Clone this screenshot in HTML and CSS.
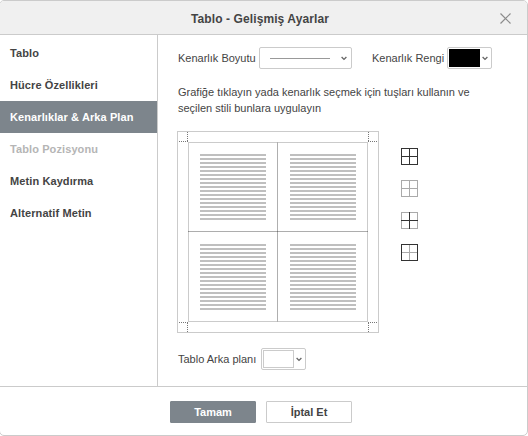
FILE: index.html
```html
<!DOCTYPE html>
<html lang="tr">
<head>
<meta charset="utf-8">
<title>Tablo - Gelişmiş Ayarlar</title>
<link rel="stylesheet" href="styles.css">
</head>
<body>
<div class="dialog">
  <header class="header">
    <h1 class="title">Tablo - Gelişmiş Ayarlar</h1>
    <svg class="close" width="11" height="11" viewBox="0 0 11 11"><path d="M.5.5l10 10M10.5.5l-10 10"/></svg>
  </header>
  <div class="body">
    <nav class="menu">
      <div class="item">Tablo</div>
      <div class="item">Hücre Özellikleri</div>
      <div class="item active">Kenarlıklar &amp; Arka Plan</div>
      <div class="item disabled">Tablo Pozisyonu</div>
      <div class="item">Metin Kaydırma</div>
      <div class="item">Alternatif Metin</div>
    </nav>
    <main class="content">
      <div class="row">
        <span class="label size-label">Kenarlık Boyutu</span>
        <div class="combo size-combo"><span class="line"></span><svg class="chevron" width="6" height="5" viewBox="0 0 6 5"><path d="M.6 1L3 3.4 5.4 1"/></svg></div>
        <span class="label color-label">Kenarlık Rengi</span>
        <div class="combo color-combo"><span class="swatch black"></span><svg class="chevron" width="6" height="5" viewBox="0 0 6 5"><path d="M.6 1L3 3.4 5.4 1"/></svg></div>
      </div>
      <p class="hint">Grafiğe tıklayın yada kenarlık seçmek için tuşları kullanın ve<br>seçilen stili bunlara uygulayın</p>
      <div class="designer">
        <svg class="preview" width="202" height="202" viewBox="0 0 202 202" shape-rendering="crispEdges">
          <defs>
            <pattern id="text-lines" width="66" height="4" patternUnits="userSpaceOnUse" y="23"><rect width="66" height="2" fill="#bfbfbf"/></pattern>
          </defs>
          <g fill="none" stroke="#cbcbcb">
            <rect x=".5" y=".5" width="201" height="201"/>
            <rect x="11.5" y="11.5" width="179" height="179"/>
          </g>
          <g fill="url(#text-lines)">
            <rect x="23" y="23" width="66" height="66"/>
            <rect x="113" y="23" width="66" height="66"/>
          </g>
          <g fill="url(#text-lines)" transform="translate(0 90)">
            <rect x="23" y="23" width="66" height="66"/>
            <rect x="113" y="23" width="66" height="66"/>
          </g>
          <path d="M100.5 11v180" stroke="#afafaf"/>
          <path d="M11 100.5h180" stroke="#000" stroke-opacity=".32"/>
          <g fill="none" stroke="#777" stroke-dasharray="1 1">
            <path d="M10.5 1v9M2 10.5h9"/>
            <path d="M191.5 1v9M191 10.5h9"/>
            <path d="M10.5 192v9M2 191.5h9"/>
            <path d="M191.5 192v9M191 191.5h9"/>
          </g>
        </svg>
        <div class="presets">
          <svg class="preset" viewBox="0 0 17 17"><path class="on" d="M.5.5h16v16H.5zM8.5 0v17M0 8.5h17"/></svg>
          <svg class="preset" viewBox="0 0 17 17"><path class="off" d="M.5.5h16v16H.5zM8.5 0v17M0 8.5h17"/></svg>
          <svg class="preset" viewBox="0 0 17 17"><path class="off" d="M.5.5h16v16H.5z"/><path class="on" d="M8.5 0v17M0 8.5h17"/></svg>
          <svg class="preset" viewBox="0 0 17 17"><path class="off" d="M8.5 0v17M0 8.5h17"/><path class="on" d="M.5.5h16v16H.5z"/></svg>
        </div>
      </div>
      <div class="row background-row">
        <span class="label background-label">Tablo Arka planı</span>
        <div class="combo color-combo"><span class="swatch"></span><svg class="chevron" width="6" height="5" viewBox="0 0 6 5"><path d="M.6 1L3 3.4 5.4 1"/></svg></div>
      </div>
    </main>
  </div>
  <footer class="footer">
    <button class="button primary">Tamam</button>
    <button class="button">İptal Et</button>
  </footer>
</div>
</body>
</html>
```

FILE: styles.css
```css
* { box-sizing: border-box; }

body {
  margin: 0;
  overflow: hidden;
  background: #fff;
  color: #444;
  font: 11px/16px "Liberation Sans", Arial, sans-serif;
}

.dialog {
  display: flex;
  flex-direction: column;
  width: 529px;
  height: 436px;
  margin-left: -1px;
  overflow: hidden;
  border: 1px solid #cbcbcb;
  border-radius: 5px;
}

.header {
  display: flex;
  align-items: center;
  height: 34px;
  padding-right: 16px;
  border-bottom: 1px solid #cbcbcb;
  background: #f0f0f0;
}

.title {
  flex: 1;
  margin: 0;
  padding: 2px 0 0 20px;
  font-size: 12px;
  letter-spacing: .1px;
  text-align: center;
}

.close { margin-top: 1px; fill: none; stroke: #8c8c8c; stroke-width: 1.2; }

.body { display: flex; height: 351px; }

.menu {
  width: 158px;
  padding-top: 2px;
  border-right: 1px solid #cbcbcb;
}

.item {
  height: 32px;
  padding-left: 10px;
  font-weight: bold;
  line-height: 32px;
  letter-spacing: .1px;
  white-space: nowrap;
}

.active { background: #7d858c; color: #fff; }
.disabled { color: #b5b5b5; }

.content { flex: 1; padding: 12px 0 0 20px; }

.row { display: flex; align-items: center; height: 22px; }
.label { white-space: nowrap; }
.size-label { width: 81px; }
.color-label { width: 75px; margin-left: 20px; }
.background-label { width: 83px; }

.combo {
  display: flex;
  align-items: center;
  justify-content: space-between;
  height: 22px;
  border: 1px solid #cbcbcb;
  border-radius: 2px;
  background: #fff;
}

.size-combo { width: 93px; padding: 0 4px 0 10px; }
.color-combo { width: 45px; padding: 0 3px 0 1px; }
.line { width: 60px; height: 1px; background: #999; }
.swatch { width: 31px; height: 18px; border: 1px solid #cbcbcb; }
.black { border-color: #000; background: #000; }
.chevron { fill: none; stroke: #666; stroke-width: 1.3; }

.hint { margin: 15px 0; white-space: nowrap; }

.designer { display: flex; gap: 22px; margin-left: -1px; }
.preview { display: block; }

.presets { display: flex; flex-direction: column; gap: 15px; padding-top: 17px; }
.preset { width: 17px; height: 17px; fill: none; shape-rendering: crispEdges; }
.on { stroke: #333; }
.off { stroke: #aaa; }

.background-row { margin-top: 15px; }

.footer {
  display: flex;
  gap: 10px;
  height: 49px;
  padding: 14px 0 0 170px;
  border-top: 1px solid #cbcbcb;
}

.button {
  width: 86px;
  height: 22px;
  padding: 0;
  border: 1px solid #cbcbcb;
  border-radius: 1px;
  background: #fff;
  color: #444;
  font: bold 11px/18px "Liberation Sans", Arial, sans-serif;
}

.primary { border-color: #7d858c; background: #7d858c; color: #fff; }
```
